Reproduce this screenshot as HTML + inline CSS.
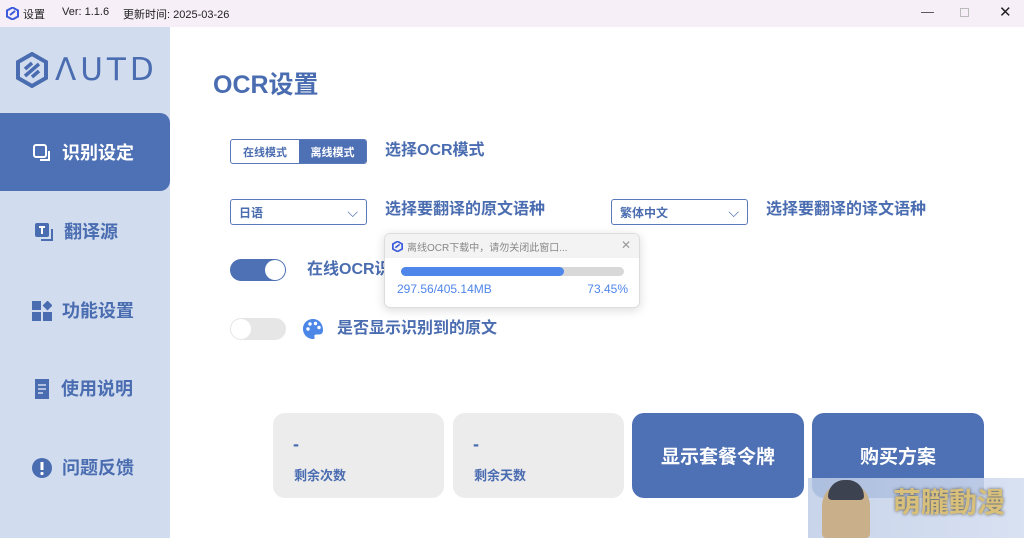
<!DOCTYPE html>
<html><head><meta charset="utf-8"><style>
*{margin:0;padding:0;box-sizing:border-box}
body{width:1024px;height:538px;overflow:hidden;background:#fff;font-family:"Liberation Sans","Noto Sans CJK SC",sans-serif;position:relative;color:#4a6cb0}
.abs{position:absolute}
.top{left:0;top:0;width:1024px;height:27px;background:#f6eff7;font-size:11px;color:#222}
.side{left:0;top:27px;width:170px;height:511px;background:#d1dcee}
.nav{left:30px;font-size:18px;font-weight:bold;color:#4a6cb0;display:flex;align-items:center;gap:10px;line-height:22px}
.b{font-weight:bold;line-height:1.1}
.sel{border:1px solid #5a79bb;border-radius:3px;height:26px;font-size:12px;font-weight:bold;padding:0 8px;display:flex;align-items:center;justify-content:space-between;color:#4a6cb0}
.card{top:413px;width:171px;height:85px;border-radius:12px;background:#ececec}
.btn{top:413px;width:172px;height:85px;border-radius:12px;background:#4e70b4;color:#fff;font-size:19px;font-weight:bold;display:flex;align-items:center;justify-content:center}
</style></head><body>
<div class="abs top">
<svg class="abs" style="left:6px;top:7px" width="13" height="13" viewBox="0 0 13 13"><polygon points="6.5,0.5 12,3.5 12,9.5 6.5,12.5 1,9.5 1,3.5" fill="none" stroke="#3b5bdc" stroke-width="2"/><path d="M4 8 L9 4" stroke="#3b5bdc" stroke-width="2"/></svg>
<span class="abs" style="left:23px;top:6px">设置</span>
<span class="abs" style="left:62px;top:6px">Ver: 1.1.6</span>
<span class="abs" style="left:123px;top:6px">更新时间: 2025-03-26</span>
<span class="abs" style="left:921px;top:4px;font-size:13px;color:#444">—</span>
<span class="abs" style="left:960px;top:8px;width:9px;height:9px;border:1px solid #bbb"></span>
<span class="abs" style="left:999px;top:3px;font-size:15px;color:#222">✕</span>
</div>
<div class="abs side"></div>
<svg class="abs" style="left:15px;top:52px" width="34" height="36" viewBox="0 0 34 36"><polygon points="17,2 31,10 31,26 17,34 3,26 3,10" fill="none" stroke="#4a6cb0" stroke-width="4"/><path d="M10 24 L24 12 M10 17 L17 11 M17 25 L24 19" stroke="#4a6cb0" stroke-width="3.5"/></svg>
<div class="abs" style="left:55px;top:52px;font-size:31px;color:#4a6cb0;letter-spacing:4px;font-family:'DejaVu Sans',sans-serif">ΛUTD</div>
<div class="abs" style="left:0;top:113px;width:170px;height:78px;background:#4e70b4;border-radius:0 10px 10px 0"></div>
<div class="abs nav" style="top:142px;color:#fff;left:32px"><svg width="20" height="20" viewBox="0 0 20 20"><rect x="2" y="2" width="12" height="12" rx="2" fill="none" stroke="#fff" stroke-width="2"/><path d="M17 8v9H8" fill="none" stroke="#fff" stroke-width="2"/></svg>识别设定</div>
<div class="abs nav" style="top:221px;left:34px"><svg width="20" height="20" viewBox="0 0 20 20"><rect x="1" y="1" width="14" height="14" rx="2" fill="#4a6cb0"/><path d="M5 5h6M8 5v7" stroke="#fff" stroke-width="2"/><path d="M18 7v11H7" fill="none" stroke="#4a6cb0" stroke-width="2"/></svg>翻译源</div>
<div class="abs nav" style="top:300px;left:32px"><svg width="20" height="20" viewBox="0 0 20 20"><rect x="0" y="0" width="9" height="9" fill="#4a6cb0"/><rect x="0" y="11" width="9" height="9" fill="#4a6cb0"/><rect x="11" y="11" width="9" height="9" fill="#4a6cb0"/><rect x="12" y="1" width="7" height="7" fill="#4a6cb0" transform="rotate(45 15.5 4.5)"/></svg>功能设置</div>
<div class="abs nav" style="top:378px;left:33px"><svg width="18" height="20" viewBox="0 0 18 20"><path d="M2 0h14v20H2z" fill="#4a6cb0"/><path d="M5 6h8M5 10h8M5 14h5" stroke="#d1dcee" stroke-width="1.5"/></svg>使用说明</div>
<div class="abs nav" style="top:457px;left:32px"><svg width="20" height="20" viewBox="0 0 20 20"><circle cx="10" cy="10" r="10" fill="#4a6cb0"/><path d="M10 4v8" stroke="#fff" stroke-width="3"/><circle cx="10" cy="15.5" r="1.6" fill="#fff"/></svg>问题反馈</div>

<div class="abs b" style="left:213px;top:72px;font-size:25px">OCR设置</div>
<div class="abs" style="left:230px;top:139px;width:137px;height:25px;border:1px solid #5a79bb;border-radius:3px;overflow:hidden;display:flex;font-size:11px;font-weight:bold">
<div style="width:68px;display:flex;align-items:center;justify-content:center">在线模式</div>
<div style="flex:1;background:#4e70b4;color:#fff;display:flex;align-items:center;justify-content:center">离线模式</div></div>
<div class="abs b" style="left:385px;top:142px;font-size:16px">选择OCR模式</div>
<div class="abs sel" style="left:230px;top:199px;width:137px"><span>日语</span><span style="font-weight:normal;font-size:14px">⌵</span></div>
<div class="abs b" style="left:385px;top:201px;font-size:16px">选择要翻译的原文语种</div>
<div class="abs sel" style="left:611px;top:199px;width:137px"><span>繁体中文</span><span style="font-weight:normal;font-size:14px">⌵</span></div>
<div class="abs b" style="left:766px;top:201px;font-size:16px">选择要翻译的译文语种</div>

<div class="abs" style="left:230px;top:259px;width:56px;height:22px;border-radius:11px;background:#4e70b4"></div>
<div class="abs" style="left:265px;top:260px;width:20px;height:20px;border-radius:10px;background:#fff"></div>
<div class="abs b" style="left:307px;top:261px;font-size:16px">在线OCR识</div>
<div class="abs" style="left:230px;top:318px;width:56px;height:22px;border-radius:11px;background:#e6e6e6"></div>
<div class="abs" style="left:231px;top:319px;width:20px;height:20px;border-radius:10px;background:#fff"></div>
<svg class="abs" style="left:302px;top:318px" width="22" height="22" viewBox="0 0 22 22"><path d="M11 1C5 1 1 5.5 1 11s4.5 10 10 10c1.5 0 2-1 1.5-2s0-2.5 1.5-2.5h3c3 0 4-2 4-4.5C21 6 17 1 11 1z" fill="#4c86e6"/><circle cx="6" cy="11" r="1.7" fill="#fff"/><circle cx="8" cy="6" r="1.7" fill="#fff"/><circle cx="13.5" cy="5.5" r="1.7" fill="#fff"/><circle cx="17" cy="9.5" r="1.7" fill="#fff"/></svg>
<div class="abs b" style="left:337px;top:320px;font-size:16px">是否显示识别到的原文</div>

<div class="abs" style="left:384px;top:233px;width:256px;height:75px;background:#fff;border:1px solid #ddd;border-radius:6px;box-shadow:0 2px 10px rgba(0,0,0,.15);overflow:hidden">
<div style="height:24px;background:#f3f3f3;font-size:10px;color:#888;display:flex;align-items:center;padding-left:7px;gap:4px"><svg width="11" height="11" viewBox="0 0 13 13"><polygon points="6.5,0.5 12,3.5 12,9.5 6.5,12.5 1,9.5 1,3.5" fill="none" stroke="#3b5bdc" stroke-width="2"/><path d="M4 8 L9 4" stroke="#3b5bdc" stroke-width="2"/></svg>离线OCR下载中，请勿关闭此窗口...<span style="position:absolute;left:236px;top:4px;font-size:12px;color:#999">✕</span></div>
<div style="position:absolute;left:16px;top:33px;width:223px;height:9px;border-radius:5px;background:#d8d8d8"><div style="width:163px;height:9px;border-radius:5px;background:#4f86ea"></div></div>
<div style="position:absolute;left:12px;top:48px;font-size:12px;color:#4f86ea">297.56/405.14MB</div>
<div style="position:absolute;right:11px;top:48px;font-size:12px;color:#4f86ea">73.45%</div>
</div>

<div class="abs card" style="left:273px"><div class="abs b" style="left:20px;top:22px;font-size:18px">-</div><div class="abs b" style="left:21px;top:56px;font-size:13px">剩余次数</div></div>
<div class="abs card" style="left:453px"><div class="abs b" style="left:20px;top:22px;font-size:18px">-</div><div class="abs b" style="left:21px;top:56px;font-size:13px">剩余天数</div></div>
<div class="abs btn" style="left:632px">显示套餐令牌</div>
<div class="abs btn" style="left:812px">购买方案</div>
<div class="abs" style="left:808px;top:478px;width:216px;height:60px;background:linear-gradient(90deg,rgba(190,205,230,.85),rgba(210,220,240,.85))"></div>
<div class="abs" style="left:822px;top:482px;width:48px;height:56px;border-radius:24px 24px 4px 4px;background:#c9b08a"></div>
<div class="abs" style="left:828px;top:480px;width:36px;height:20px;border-radius:18px 18px 4px 4px;background:#3d4250"></div>
<div class="abs b" style="left:893px;top:488px;font-size:28px;color:#d8c07a;text-shadow:0 0 3px #555">萌朧動漫</div>
</body></html>
